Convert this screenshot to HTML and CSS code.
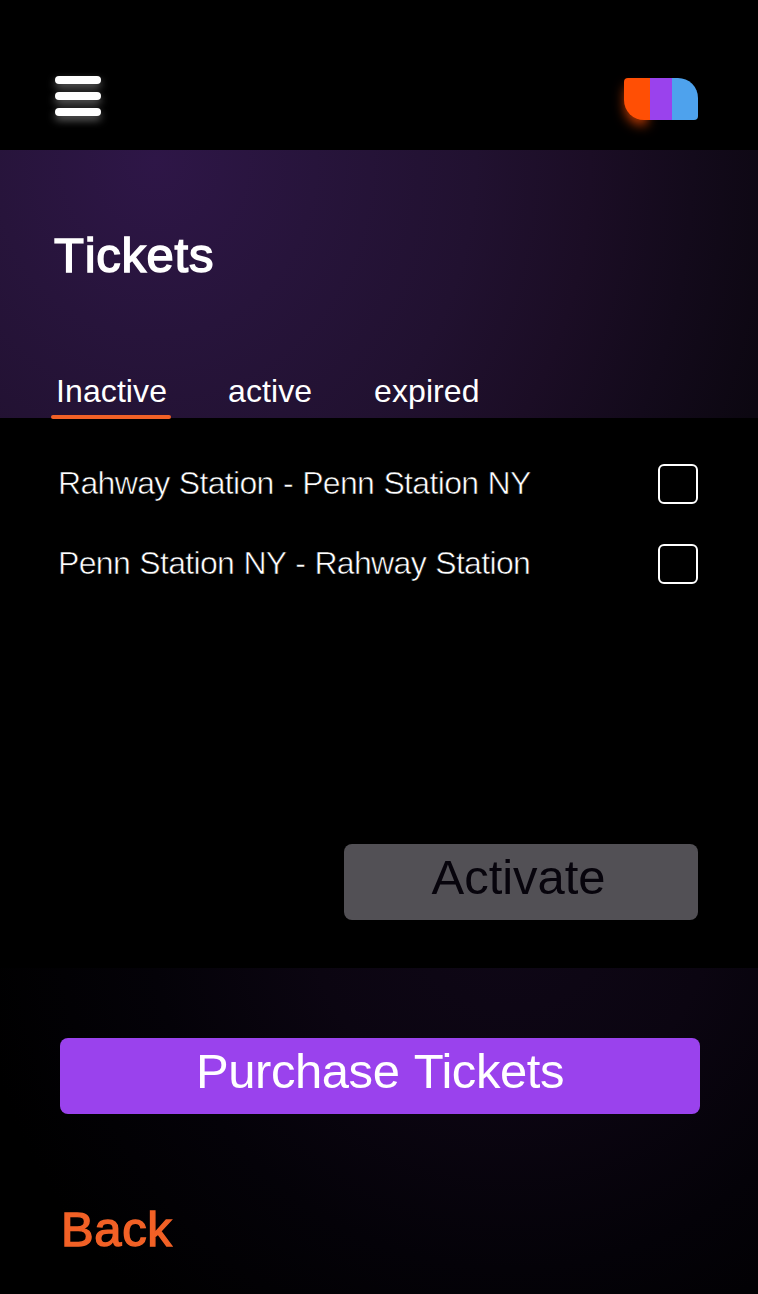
FILE: index.html
```html
<!DOCTYPE html>
<html lang="en">
<head>
<meta charset="utf-8">
<title>Tickets</title>
<link rel="stylesheet" href="styles.css">
</head>
<body>
<div class="screen">
  <header class="topbar">
    <button class="menu" aria-label="Menu"><span class="bar"></span><span class="bar"></span><span class="bar"></span></button>
    <div class="logo"><span class="logo-orange"></span><span class="logo-purple"></span><span class="logo-blue"></span></div>
  </header>
  <section class="hero">
    <h1 class="title">Tickets</h1>
    <nav class="tabs">
      <a class="tab tab-current">Inactive</a>
      <a class="tab">active</a>
      <a class="tab">expired</a>
    </nav>
  </section>
  <main class="list">
    <label class="row"><span class="route">Rahway Station - Penn Station NY</span><span class="check"></span></label>
    <label class="row"><span class="route">Penn Station NY - Rahway Station</span><span class="check"></span></label>
    <button class="button activate">Activate</button>
  </main>
  <footer class="actions">
    <button class="button purchase">Purchase Tickets</button>
    <a class="back">Back</a>
  </footer>
</div>
</body>
</html>
```
FILE: styles.css
```css
* { box-sizing: border-box; }
body { margin: 0; background: #000; color: #fff; font-family: "Liberation Sans", Arial, sans-serif; }
button { border: 0; padding: 0; background: none; color: inherit; font: inherit; }
.screen { width: 758px; height: 1294px; display: flex; flex-direction: column; overflow: hidden; }

.topbar { height: 150px; padding: 76px 60px 0 55px; display: flex; justify-content: space-between; align-items: flex-start; }
.menu { width: 46px; display: flex; flex-direction: column; gap: 8px; }
.bar { height: 8px; border-radius: 4px; background: #fff; box-shadow: 0 4px 8px rgba(255, 255, 255, .4); }
.logo { width: 74px; height: 42px; margin-top: 2px; display: flex; }
.logo-orange { width: 26px; border-radius: 4px 0 0 20px; background: #ff4f05; box-shadow: -1px 7px 12px -2px rgba(255, 79, 5, .75); }
.logo-purple { width: 22px; background: #9a42ed; }
.logo-blue { width: 26px; border-radius: 0 20px 4px 0; background: #4ea2ed; }

.hero { height: 268px; padding: 75px 0 0 51px; background: radial-gradient(640px 700px at 155px 10px, #2e1647 0, #27143b 25%, #211130 50%, #1b0d25 68%, #130a1b 84%, #0c0711 100%); }
.title { margin: 0 0 86px 3px; font-size: 49px; line-height: 60px; font-weight: 400; font-kerning: none; letter-spacing: .7px; -webkit-text-stroke: 1.5px #fff; }
.tabs { display: grid; grid-template-columns: 176px 146px 120px; }
.tab { height: 48px; padding-left: 1px; font-size: 32px; line-height: 40px; letter-spacing: .1px; white-space: nowrap; position: relative; }
.tab-current { width: 120px; padding-left: 5px; }
.tab-current::after { content: ""; position: absolute; left: 0; bottom: 0; width: 120px; height: 4px; border-radius: 2px; background: #f26126; }

.list { height: 550px; padding: 26px 60px 0 58px; background: #000; display: flex; flex-direction: column; }
.row { height: 80px; display: flex; justify-content: space-between; align-items: center; }
.route { padding-bottom: 2px; font-size: 32px; line-height: 40px; letter-spacing: -.67px; word-spacing: 1px; -webkit-text-stroke: .6px #000; white-space: nowrap; }
.check { width: 40px; height: 40px; border: 2px solid #fff; border-radius: 6px; }
.button { height: 76px; padding-bottom: 10px; border-radius: 8px; font-size: 49px; line-height: 66px; text-align: center; }
.activate { width: 354px; margin: 240px 0 0; padding-right: 5px; align-self: flex-end; background: #525055; color: #07040c; letter-spacing: -.05px; }

.actions { height: 326px; padding: 70px 58px 0 60px; background: radial-gradient(circle at 510px -60px, #0f0717 0, #0b0511 200px, #040208 360px, #000 540px); display: flex; flex-direction: column; }
.purchase { background: #9a42ed; letter-spacing: -.45px; word-spacing: 2px; }
.back { margin-top: 85px; padding-left: 1px; font-size: 49px; line-height: 60px; letter-spacing: .6px; color: #f26126; -webkit-text-stroke: 1.4px #f26126; }
```
